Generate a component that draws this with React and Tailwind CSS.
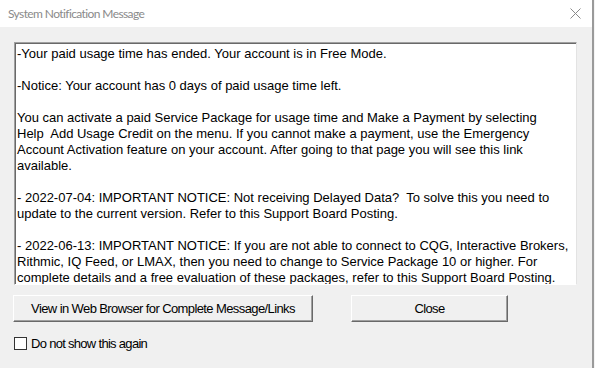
import React from 'react';

const lines = [
  '-Your paid usage time has ended. Your account is in Free Mode.',
  '',
  '-Notice: Your account has 0 days of paid usage time left.',
  '',
  'You can activate a paid Service Package for usage time and Make a Payment by selecting',
  'Help  Add Usage Credit on the menu. If you cannot make a payment, use the Emergency',
  'Account Activation feature on your account. After going to that page you will see this link',
  'available.',
  '',
  '- 2022-07-04: IMPORTANT NOTICE: Not receiving Delayed Data?  To solve this you need to',
  'update to the current version. Refer to this Support Board Posting.',
  '',
  '- 2022-06-13: IMPORTANT NOTICE: If you are not able to connect to CQG, Interactive Brokers,',
  'Rithmic, IQ Feed, or LMAX, then you need to change to Service Package 10 or higher. For',
  'complete details and a free evaluation of these packages, refer to this Support Board Posting.',
];

function ClassicButton({ width, children }) {
  return (
    <button
      className={`${width} h-[27px] bg-[#f0f0f0] border-t border-l border-t-white border-l-white border-b border-r border-b-[#696969] border-r-[#696969] shadow-[inset_-1px_-1px_0_#a0a0a0] text-[13px] tracking-[-0.6px] text-black flex items-center justify-center`}
    >
      {children}
    </button>
  );
}

export default function App() {
  return (
    <div className="w-[595px] h-[368px] flex overflow-hidden" style={{ fontFamily: '"Liberation Sans", Arial, sans-serif' }}>
      <div className="flex-1 flex flex-col bg-[#f0f0f0]">
        {/* Title bar */}
        <div className="h-[27px] bg-white flex items-center justify-between pl-[8px] pr-[11px]">
          <span className="text-[12px] tracking-[-0.6px] text-[#8a8a8a]" style={{ fontFamily: 'Lato, "Noto Sans", sans-serif' }}>
            System Notification Message
          </span>
          <svg width="11" height="11" viewBox="0 0 11 11" className="mb-[1px]">
            <path d="M0.5 0.5 L10.5 10.5 M10.5 0.5 L0.5 10.5" stroke="#8a8a8a" strokeWidth="1" fill="none" />
          </svg>
        </div>

        {/* Body */}
        <div className="flex flex-col pl-[14px] pt-[15px]">
          <div className="w-[563px] h-[243px] bg-white border-t border-l border-t-[#a0a0a0] border-l-[#a0a0a0] border-b border-r border-b-white border-r-[#e3e3e3] shadow-[inset_1px_1px_0_#696969] overflow-hidden pl-[2px] pt-[3px]">
            <div className="text-[13px] leading-[16px] text-black whitespace-pre">
              {lines.map((l, i) => (
                <div key={i} className="h-[16px]">{l}</div>
              ))}
            </div>
          </div>

          <div className="flex mt-[10px] -ml-[1px]">
            <ClassicButton width="w-[300px]">View in Web Browser for Complete Message/Links</ClassicButton>
            <div className="ml-[38px]">
              <ClassicButton width="w-[157px]">Close</ClassicButton>
            </div>
          </div>

          <div className="flex items-center mt-[12px]">
            <div className="w-[13px] h-[13px] bg-white border border-[#333333]" />
            <span className="ml-[4px] text-[13px] tracking-[-0.7px] text-black">Do not show this again</span>
          </div>
        </div>
      </div>
      <div className="w-[2px] bg-[#9a9a9a]" />
      <div className="w-[1px] bg-[#f4f4f4]" />
    </div>
  );
}
